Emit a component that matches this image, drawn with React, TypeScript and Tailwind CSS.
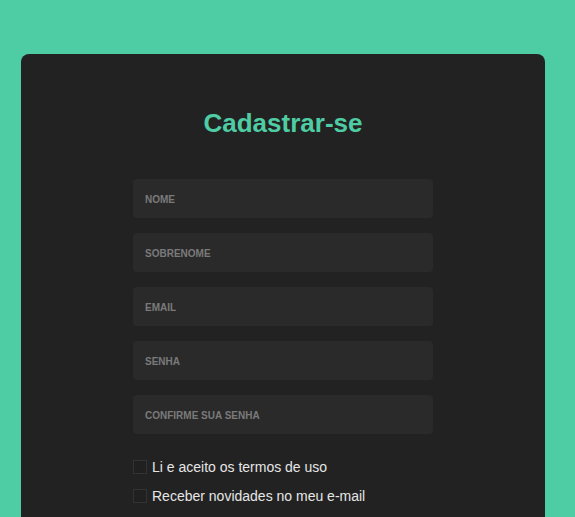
export default function App() {
  const fields = ['Nome', 'Sobrenome', 'Email', 'Senha', 'Confirme sua senha'];
  const checks = ['Li e aceito os termos de uso', 'Receber novidades no meu e-mail'];

  return (
    <div className="h-[517px] overflow-hidden bg-[#4ecca3] pt-[54px] pl-[21px] font-['Liberation_Sans',Arial,sans-serif]">
      <div className="w-[524px] h-[520px] rounded-lg bg-[#222222] pt-[54px]">
        <h1 className="text-center text-[26px] leading-[30px] font-bold text-[#4ecca3]">Cadastrar-se</h1>

        <form className="mx-auto mt-[41px] flex w-[300px] flex-col gap-[15px]">
          {fields.map((f) => (
            <input
              key={f}
              type="text"
              placeholder={f.toUpperCase()}
              className="h-[39px] w-full rounded bg-[#2a2a2a] px-3 pt-[2px] text-[10px] font-bold text-[#bbb] outline-none placeholder:text-[#7a7a7a]"
            />
          ))}

          <div className="mt-[9px] flex flex-col gap-[12px]">
            {checks.map((c) => (
              <label key={c} className="flex items-center gap-[5px] text-[14px] leading-[16px] text-[#e6e6e6]">
                <span className="h-[14px] w-[14px] border border-[#333] bg-[#202020]" />
                <span className="pt-[1px]">{c}</span>
              </label>
            ))}
          </div>
        </form>
      </div>
    </div>
  );
}
